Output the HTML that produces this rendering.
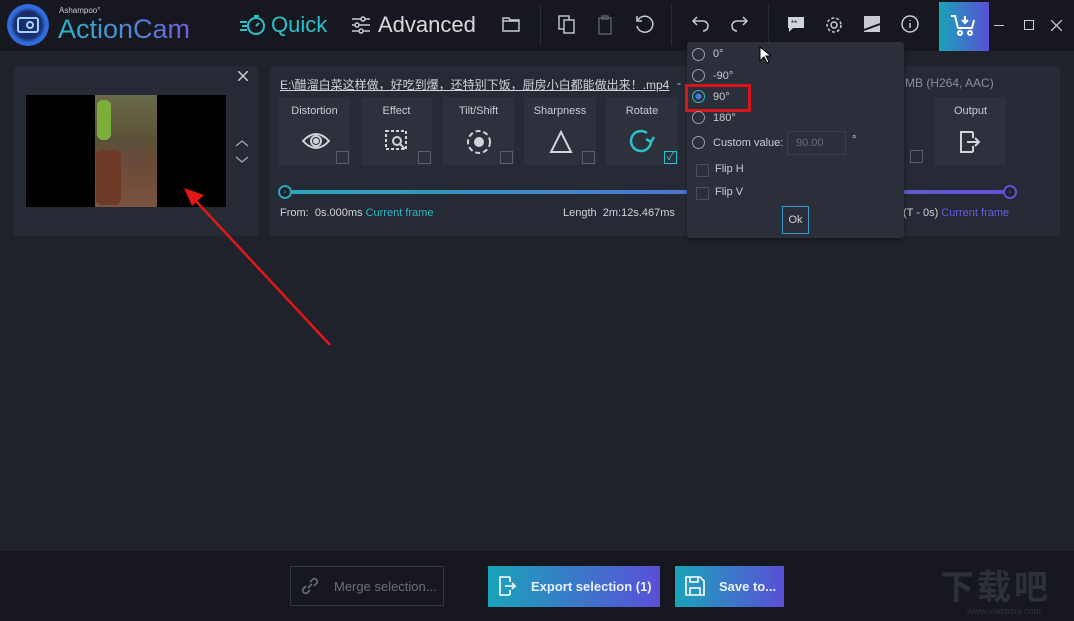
<!DOCTYPE html>
<html><head><meta charset="utf-8"><style>
*{margin:0;padding:0;box-sizing:border-box}
body{width:1074px;height:621px;overflow:hidden;background:#1f222b;font-family:"Liberation Sans","Noto Sans CJK SC",sans-serif;color:#d0d3da;position:relative}
.a{position:absolute}
.top{left:0;top:0;width:1074px;height:51px;background:#17181f}
.bot{left:0;top:551px;width:1074px;height:70px;background:#17181f}
.panel{background:#262a34}
.tile{background:#2d313c;width:71px;height:68px;top:97px}
.tile .t{position:absolute;top:8px;width:100%;text-align:center;font-size:11px;color:#c8cbd2}
.tile .cb{position:absolute;right:1px;bottom:1px;width:13px;height:13px;border:1px solid #5a5e68}
.sep{width:1px;height:40px;top:5px;background:#2b2d35}
.grad{background:linear-gradient(90deg,#1aa3b8,#5a4fd8)}
.radio{width:13px;height:13px;border:1px solid #9a9ea8;border-radius:50%}
.pt{font-size:11px;color:#c8cbd2}
</style></head><body>
<div class="a top"></div>
<div class="a" style="left:7px;top:4px;width:42px;height:42px;border-radius:50%;background:radial-gradient(circle,#1b2c6a 45%,#2f6fe0 60%,#3a4fd0 100%)"></div>
<div class="a" style="left:17px;top:17px;width:22px;height:16px;border:2px solid #9fd4ff;border-radius:3px"></div>
<div class="a" style="left:26px;top:21px;width:8px;height:8px;border:2px solid #9fd4ff;border-radius:50%"></div>
<div class="a" style="left:59px;top:6px;font-size:8px;color:#c8cbd2">Ashampoo°</div>
<div class="a" style="left:58px;top:14px;font-size:27px;background:linear-gradient(90deg,#2bb5c8,#6d5ee0);-webkit-background-clip:text;color:transparent">ActionCam</div>
<svg class="a" style="left:238px;top:13px" width="30" height="24" viewBox="0 0 30 24" fill="none" stroke="#2cc0c8" stroke-width="2"><circle cx="18" cy="13" r="8"/><path d="M18 13l3-3M16 3h5M2 9h7M4 13h5M2 17h7"/></svg>
<div class="a" style="left:271px;top:12px;font-size:22px;color:#2cc0c8">Quick</div>
<svg class="a" style="left:351px;top:15px" width="20" height="20" viewBox="0 0 20 20" stroke="#c8cbd2" stroke-width="1.5"><path d="M1 4h18M1 10h18M1 16h18"/><circle cx="12" cy="4" r="2" fill="#17181f"/><circle cx="6" cy="10" r="2" fill="#17181f"/><circle cx="10" cy="16" r="2" fill="#17181f"/></svg>
<div class="a" style="left:378px;top:12px;font-size:22px;color:#d8dade">Advanced</div>
<svg class="a" style="left:502px;top:17px" width="18" height="15" fill="none" stroke="#c8cbd2" stroke-width="1.4"><path d="M1 1h6l1 2h9v11H1z M1 4h16"/></svg>
<div class="a sep" style="left:540px"></div>
<svg class="a" style="left:558px;top:15px" width="18" height="20" fill="none" stroke="#c8cbd2" stroke-width="1.4"><rect x="1" y="1" width="10" height="13"/><rect x="6" y="5" width="10" height="13" fill="#17181f"/></svg>
<svg class="a" style="left:598px;top:15px" width="14" height="20" fill="none" stroke="#5d606a" stroke-width="1.4"><rect x="1" y="3" width="12" height="16"/><rect x="4" y="1" width="6" height="3"/></svg>
<svg class="a" style="left:634px;top:14px" width="20" height="20" fill="none" stroke="#c8cbd2" stroke-width="1.5"><path d="M4 6A8 8 0 1 1 3 12"/><path d="M3 2v5h5"/></svg>
<div class="a sep" style="left:671px"></div>
<svg class="a" style="left:691px;top:15px" width="20" height="18" fill="none" stroke="#c8cbd2" stroke-width="1.5"><path d="M6 2L2 6l4 4M2 6h10a5 5 0 0 1 0 10"/></svg>
<svg class="a" style="left:729px;top:15px" width="20" height="18" fill="none" stroke="#c8cbd2" stroke-width="1.5"><path d="M14 2l4 4-4 4M18 6H8a5 5 0 0 0 0 10"/></svg>
<div class="a sep" style="left:768px"></div>
<svg class="a" style="left:787px;top:16px" width="18" height="18"><path d="M1 1h16v11H6l-4 4v-4H1z" fill="#d0d3da"/><text x="4" y="10" font-size="8" fill="#17181f">**</text></svg>
<svg class="a" style="left:824px;top:15px" width="20" height="20" fill="none" stroke="#c8cbd2" stroke-width="1.5"><circle cx="10" cy="10" r="3"/><circle cx="10" cy="10" r="7" stroke-dasharray="3 2"/></svg>
<svg class="a" style="left:864px;top:16px" width="16" height="16"><rect width="16" height="16" fill="#c8cbd2"/><path d="M0 14L16 8" stroke="#17181f" stroke-width="2"/></svg>
<svg class="a" style="left:901px;top:15px" width="18" height="18" fill="none" stroke="#c8cbd2" stroke-width="1.5"><circle cx="9" cy="9" r="8"/><path d="M9 8v5M9 5v1"/></svg>
<div class="a grad" style="left:939px;top:2px;width:50px;height:49px"></div>
<svg class="a" style="left:950px;top:14px" width="28" height="24" fill="none" stroke="#fff" stroke-width="2"><path d="M1 2h4l3 12h14l2-8M15 2v7M12 6l3 3 3-3"/><circle cx="10" cy="19" r="2"/><circle cx="20" cy="19" r="2"/></svg>
<div class="a" style="left:994px;top:25px;width:10px;height:1px;background:#c8cbd2"></div>
<div class="a" style="left:1024px;top:20px;width:10px;height:10px;border:1px solid #c8cbd2"></div>
<svg class="a" style="left:1051px;top:20px" width="11" height="11" stroke="#c8cbd2" stroke-width="1.3"><path d="M0 0l11 11M11 0L0 11"/></svg>

<div class="a panel" style="left:14px;top:66px;width:244px;height:170px"></div>
<svg class="a" style="left:238px;top:71px" width="10" height="10" stroke="#c8cbd2" stroke-width="1.5"><path d="M0 0l10 10M10 0L0 10"/></svg>
<div class="a" style="left:26px;top:95px;width:200px;height:112px;background:#000"></div>
<div class="a" style="left:95px;top:95px;width:62px;height:112px;background:linear-gradient(180deg,#6b6a4c 0%,#5a5238 40%,#6a4a38 60%,#7a5440 100%)"></div>
<div class="a" style="left:97px;top:100px;width:14px;height:40px;background:#7ab03a;border-radius:6px"></div>
<div class="a" style="left:96px;top:150px;width:25px;height:55px;background:#6e3a28;border-radius:6px"></div>
<svg class="a" style="left:234px;top:137px" width="16" height="30" fill="none" stroke="#a0a4ae" stroke-width="1.3"><path d="M2 9l6-5 6 5M2 20l6 5 6-5"/></svg>

<div class="a panel" style="left:270px;top:66px;width:790px;height:170px"></div>
<div class="a" style="left:280px;top:76px;font-size:12px;color:#d0d3da;text-decoration:underline">E:\醋溜白菜这样做，好吃到爆，还特别下饭，厨房小白都能做出来！.mp4</div>
<div class="a" style="left:677px;top:76px;font-size:12px;color:#d0d3da">-</div>
<div class="a" style="left:905px;top:76px;font-size:12px;color:#8a8e98">MB (H264, AAC)</div>
<div class="a tile" style="left:279px"><div class="t">Distortion</div><div class="cb"></div>
<svg class="a" style="left:22px;top:32px" width="30" height="24" fill="none" stroke="#d0d3da" stroke-width="2"><path d="M2 12Q15 -2 28 12Q15 26 2 12z"/><circle cx="15" cy="12" r="5"/><circle cx="15" cy="12" r="2" fill="#d0d3da"/></svg></div>
<div class="a tile" style="left:361px"><div class="t">Effect</div><div class="cb"></div>
<svg class="a" style="left:23px;top:32px" width="26" height="26" fill="none" stroke="#d0d3da" stroke-width="2"><rect x="2" y="2" width="20" height="18" stroke-dasharray="3 2"/><circle cx="13" cy="12" r="4"/><path d="M16 15l5 5"/></svg></div>
<div class="a tile" style="left:443px"><div class="t">Tilt/Shift</div><div class="cb"></div>
<svg class="a" style="left:22px;top:31px" width="28" height="28" fill="none" stroke="#d0d3da" stroke-width="2"><circle cx="14" cy="14" r="11" stroke-dasharray="5 3"/><circle cx="14" cy="14" r="4" fill="#d0d3da"/></svg></div>
<div class="a tile" style="left:524px;width:72px"><div class="t">Sharpness</div><div class="cb"></div>
<svg class="a" style="left:25px;top:33px" width="24" height="24" fill="none" stroke="#d0d3da" stroke-width="2"><path d="M12 2L22 22H2z"/></svg></div>
<div class="a tile" style="left:606px;width:72px"><div class="t">Rotate</div><div class="cb" style="border-color:#2cc0c8;color:#2cc0c8;font-size:11px;line-height:11px;text-align:center">✓</div>
<svg class="a" style="left:23px;top:32px" width="28" height="26" fill="none" stroke="#2cc0c8" stroke-width="2.5"><path d="M22 12A10 10 0 1 1 18 4"/><path d="M17 10l5 3 3-5"/></svg></div>
<div class="a" style="left:910px;top:150px;width:13px;height:13px;border:1px solid #5a5e68"></div>
<div class="a tile" style="left:935px"><div class="t">Output</div>
<svg class="a" style="left:24px;top:33px" width="24" height="24" fill="none" stroke="#d0d3da" stroke-width="2"><path d="M14 2H2v20h12M14 2v6M14 22v-6M8 12h12M16 8l4 4-4 4"/></svg></div>
<div class="a" style="left:285px;top:190px;width:725px;height:4px;background:linear-gradient(90deg,#2aa8b8,#4a7ad0 50%,#6650d8)"></div>
<div class="a" style="left:278px;top:185px;width:14px;height:14px;border-radius:50%;border:2px solid #2aa8b8;background:#1f222b;font-size:8px;color:#2aa8b8;text-align:center;line-height:10px">›</div>
<div class="a" style="left:1003px;top:185px;width:14px;height:14px;border-radius:50%;border:2px solid #6650d8;background:#1f222b;font-size:8px;color:#6650d8;text-align:center;line-height:10px">‹</div>
<div class="a" style="left:280px;top:207px;font-size:11px">From: &nbsp;0s.000ms <span style="color:#2cb8c8">Current frame</span></div>
<div class="a" style="left:563px;top:207px;font-size:11px">Length &nbsp;2m:12s.467ms</div>
<div class="a" style="left:903px;top:207px;font-size:11px">(T - 0s) <span style="color:#6a5ee0">Current frame</span></div>

<div class="a" style="left:687px;top:42px;width:217px;height:196px;background:#2b2f3a;border-radius:3px;box-shadow:0 2px 6px rgba(0,0,0,.4)"></div>
<div class="a radio" style="left:692px;top:48px"></div><div class="a pt" style="left:713px;top:48px">0°</div>
<div class="a radio" style="left:692px;top:69px"></div><div class="a pt" style="left:713px;top:70px">-90°</div>
<div class="a radio" style="left:692px;top:90px;border-color:#2cc0c8;background:radial-gradient(circle,#4a7ae0 35%,transparent 40%)"></div><div class="a pt" style="left:713px;top:91px">90°</div>
<div class="a" style="left:685px;top:84px;width:66px;height:28px;border:3px solid #d8141c"></div>
<div class="a radio" style="left:692px;top:111px"></div><div class="a pt" style="left:713px;top:112px">180°</div>
<div class="a radio" style="left:692px;top:136px"></div><div class="a pt" style="left:713px;top:137px">Custom value:</div>
<div class="a" style="left:787px;top:131px;width:59px;height:24px;border:1px solid #3a3e48;font-size:11px;color:#6a6e78;padding:5px 8px">90.00</div>
<div class="a pt" style="left:852px;top:134px">°</div>
<div class="a" style="left:696px;top:164px;width:13px;height:13px;border:1px solid #4a4e58"></div><div class="a pt" style="left:715px;top:163px">Flip H</div>
<div class="a" style="left:696px;top:187px;width:13px;height:13px;border:1px solid #4a4e58"></div><div class="a pt" style="left:715px;top:186px">Flip V</div>
<div class="a" style="left:782px;top:206px;width:27px;height:28px;border:1px solid #3a9ac8;font-size:11px;text-align:center;line-height:26px">Ok</div>
<svg class="a" style="left:759px;top:46px" width="12" height="18"><path d="M1 1v14l4-4 3 6 2-1-3-6h5z" fill="#fff" stroke="#000" stroke-width="1"/></svg>

<svg class="a" style="left:0;top:0" width="1074" height="621"><line x1="330" y1="345" x2="195" y2="200" stroke="#e01818" stroke-width="2.5"/><path d="M184 188l20 7-12 11z" fill="#e01818"/></svg>

<div class="a bot"></div>
<div class="a" style="left:290px;top:566px;width:154px;height:40px;border:1px solid #33363e"></div>
<svg class="a" style="left:300px;top:576px" width="20" height="20" fill="none" stroke="#6a6e78" stroke-width="1.6"><path d="M8 12l4-4M6 10l-3 3a3 3 0 0 0 4 4l3-3M14 10l3-3a3 3 0 0 0-4-4l-3 3"/></svg>
<div class="a" style="left:334px;top:579px;font-size:13px;color:#6a6e78">Merge selection...</div>
<div class="a grad" style="left:488px;top:566px;width:172px;height:41px"></div>
<svg class="a" style="left:498px;top:576px" width="20" height="20" fill="none" stroke="#fff" stroke-width="1.6"><path d="M12 1H2v18h10M12 1v5M12 19v-5M7 10h11M14 7l3 3-3 3"/></svg>
<div class="a" style="left:531px;top:579px;font-size:13px;font-weight:bold;color:#e8f0ff">Export selection (1)</div>
<div class="a grad" style="left:675px;top:566px;width:109px;height:41px"></div>
<svg class="a" style="left:685px;top:576px" width="20" height="20" fill="none" stroke="#fff" stroke-width="1.6"><path d="M1 1h14l4 4v14H1z M5 1v5h8V1M5 19v-7h10v7"/></svg>
<div class="a" style="left:719px;top:579px;font-size:13px;font-weight:bold;color:#e8f0ff">Save to...</div>
<div class="a" style="left:940px;top:560px;font-size:34px;font-weight:bold;color:#2e3038;letter-spacing:3px;font-family:'Noto Sans CJK SC',sans-serif">下载吧</div>
<div class="a" style="left:967px;top:606px;font-size:9px;color:#2e3038">www.xiazaiba.com</div>
</body></html>
